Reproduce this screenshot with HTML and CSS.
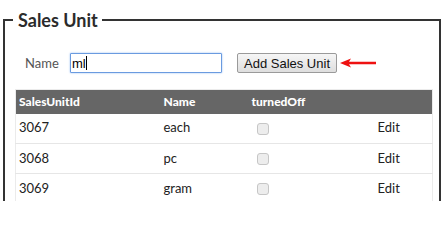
FILE: index.html
```html
<!DOCTYPE html>
<html>
<head>
<meta charset="utf-8">
<link rel="stylesheet" href="styles.css">
</head>
<body>
<fieldset class="panel">
  <legend class="panel-title">Sales Unit</legend>
  <div class="form-row">
    <label class="field-label" for="name">Name</label>
    <span class="input-wrap">
      <input id="name" class="text-input" type="text" value="ml">
      <span class="caret"></span>
    </span>
    <button class="btn" type="button">Add Sales Unit</button>
    <svg class="arrow" width="38" height="10" viewBox="0 0 38 10">
      <path d="M0 5 L11 0.5 L9 3.7 L36 3.7 L36 6.3 L9 6.3 L11 9.5 Z" fill="#ee1111"/>
    </svg>
  </div>
  <table class="grid">
    <colgroup>
      <col class="c1"><col class="c2"><col class="c3"><col class="c4">
    </colgroup>
    <thead>
      <tr><th>SalesUnitId</th><th>Name</th><th>turnedOff</th><th></th></tr>
    </thead>
    <tbody>
      <tr><td>3067</td><td>each</td><td><input type="checkbox" disabled class="chk"></td><td>Edit</td></tr>
      <tr><td>3068</td><td>pc</td><td><input type="checkbox" disabled class="chk"></td><td>Edit</td></tr>
      <tr><td>3069</td><td>gram</td><td><input type="checkbox" disabled class="chk"></td><td>Edit</td></tr>
    </tbody>
  </table>
</fieldset>
</body>
</html>
```
FILE: styles.css
```css
html, body {
  margin: 0;
  padding: 0;
  background: #fff;
}
html {
  height: 201px;
  overflow: hidden;
}
body {
  font-family: Lato, "Open Sans", sans-serif;
  color: #222;
  height: 201px;
  overflow: hidden;
}
.panel {
  margin: 9px 4px 0 3px;
  padding: 0 7px 0 10px;
  border: 2px solid #333;
  min-width: 0;
}
.panel-title {
  font-size: 18px;
  font-weight: 700;
  color: #2b2b2b;
  padding: 0 4px 0 5px;
  margin-left: -2px;
  line-height: 22px;
}
.form-row {
  display: flex;
  align-items: center;
  height: 20px;
  margin-top: 22px;
}
.field-label {
  font-size: 13px;
  color: #555;
  margin-left: 10px;
  width: 45px;
}
.input-wrap {
  position: relative;
  display: inline-flex;
}
.caret {
  position: absolute;
  left: 16px;
  top: 3px;
  width: 1px;
  height: 14px;
  background: #000;
}
.text-input {
  box-sizing: border-box;
  width: 152px;
  height: 20px;
  border: 1px solid #6a9be0;
  box-shadow: 0 0 2px #8fb8f0;
  border-radius: 1px;
  padding: 0 1px;
  font: 13px "Liberation Sans", Arial, sans-serif;
  color: #000;
  outline: none;
}
.btn {
  box-sizing: border-box;
  margin-left: 15px;
  width: 100px;
  height: 20px;
  padding: 0;
  border: 1px solid #9a9a9a;
  border-radius: 2px;
  background: linear-gradient(#f6f6f6, #dedede);
  font: 13px "Liberation Sans", Arial, sans-serif;
  color: #111;
}
.arrow {
  margin-left: 3px;
}
.grid {
  margin-top: 16px;
  width: 417px;
  border-collapse: collapse;
  table-layout: fixed;
  border: 1px solid #ebebeb;
}
.c1 { width: 145px; }
.c2 { width: 88px; }
.c3 { width: 126px; }
.c4 { width: 58px; }
.grid th {
  background: #666;
  color: #fff;
  font-size: 12px;
  font-weight: 900;
  text-align: left;
  height: 24px;
  padding: 0 3px;
  box-sizing: border-box;
}
.grid td {
  font-size: 13px;
  color: #222;
  height: 30px;
  padding: 0 3px 2px;
  border-bottom: 1px solid #e6e6e6;
  box-sizing: border-box;
}
.chk {
  appearance: none;
  -webkit-appearance: none;
  box-sizing: border-box;
  margin: 0 0 0 5px;
  width: 12px;
  height: 12px;
  border: 1px solid #c6c6c6;
  border-radius: 3px;
  background: #ededed;
  vertical-align: middle;
}
```
